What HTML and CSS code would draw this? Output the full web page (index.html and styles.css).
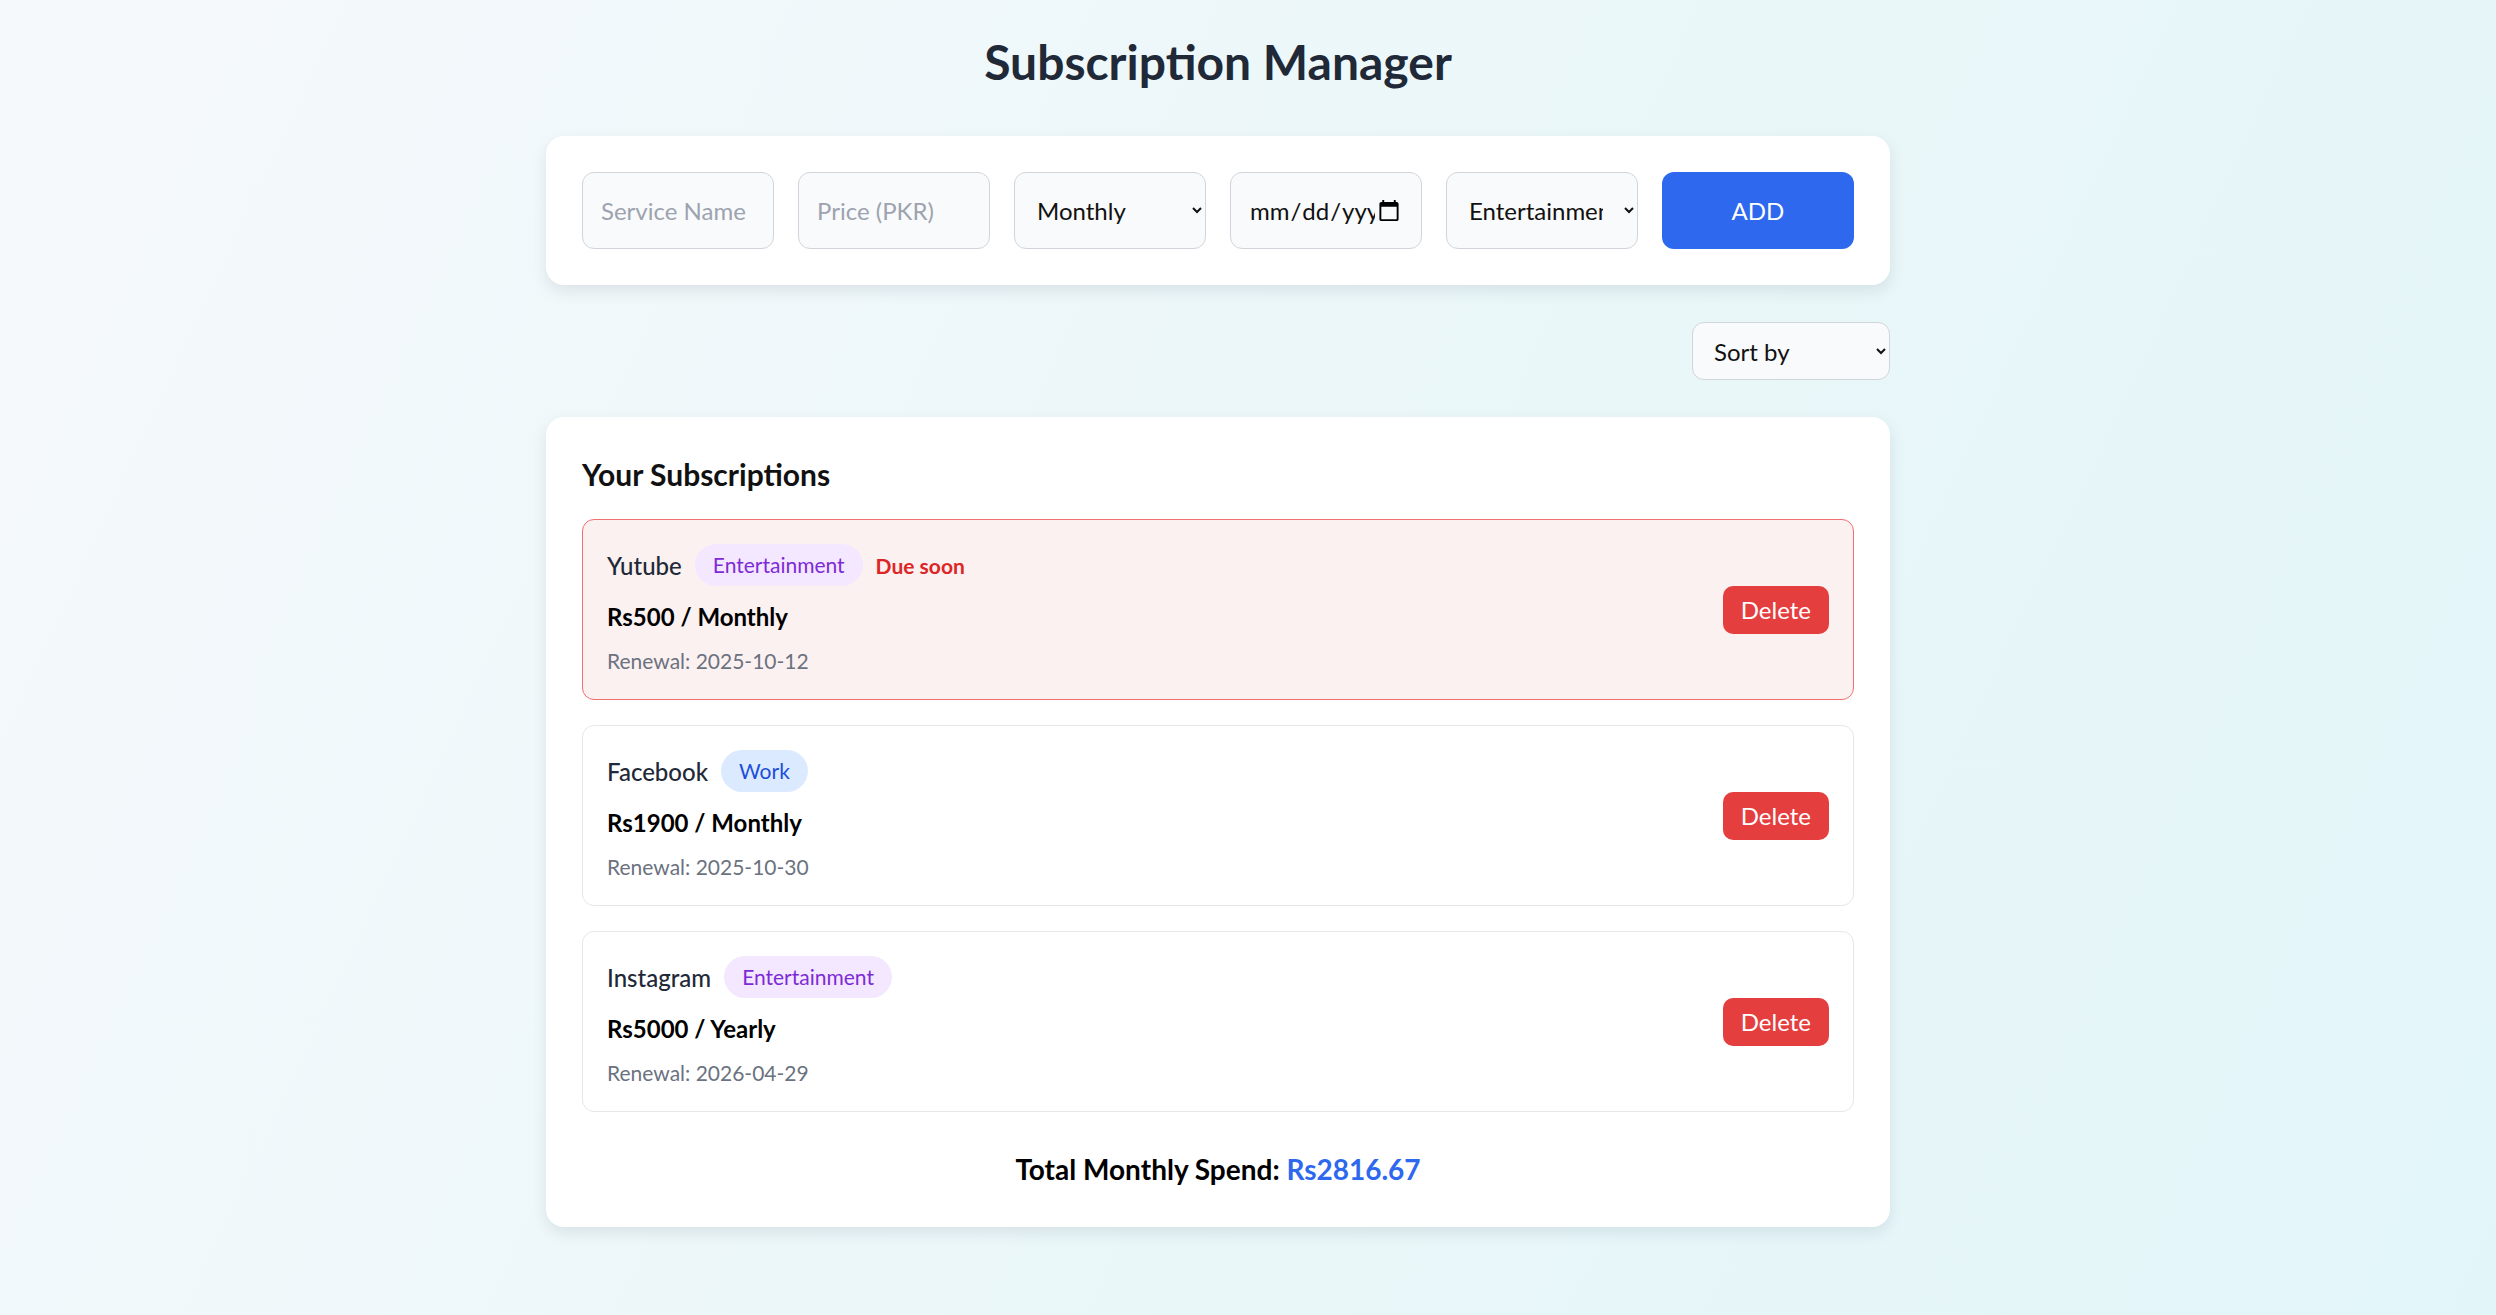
FILE: index.html
```html
<!DOCTYPE html>
<html lang="en">
<head>
<meta charset="utf-8">
<title>Subscription Manager</title>
<link rel="stylesheet" href="styles.css">
</head>
<body>
<main class="app">
  <h1 class="title">Subscription Manager</h1>

  <form class="card add-form">
    <input class="field" type="text" placeholder="Service Name">
    <input class="field" type="text" placeholder="Price (PKR)">
    <select class="field">
      <option>Monthly</option>
      <option>Yearly</option>
    </select>
    <input class="field" type="date">
    <select class="field">
      <option>Entertainment</option>
      <option>Work</option>
    </select>
    <button class="add-btn" type="button">ADD</button>
  </form>

  <div class="sort-row">
    <select class="field sort">
      <option>Sort by</option>
    </select>
  </div>

  <section class="card list-card">
    <h2 class="list-title">Your Subscriptions</h2>

    <div class="sub-list">
      <div class="sub due">
        <div class="sub-info">
          <div class="sub-head">
            <span class="sub-name">Yutube</span>
            <span class="badge badge-ent">Entertainment</span>
            <span class="due-label">Due soon</span>
          </div>
          <div class="sub-price">Rs500 / Monthly</div>
          <div class="sub-renew">Renewal: 2025-10-12</div>
        </div>
        <button class="del-btn" type="button">Delete</button>
      </div>

      <div class="sub">
        <div class="sub-info">
          <div class="sub-head">
            <span class="sub-name">Facebook</span>
            <span class="badge badge-work">Work</span>
          </div>
          <div class="sub-price">Rs1900 / Monthly</div>
          <div class="sub-renew">Renewal: 2025-10-30</div>
        </div>
        <button class="del-btn" type="button">Delete</button>
      </div>

      <div class="sub">
        <div class="sub-info">
          <div class="sub-head">
            <span class="sub-name">Instagram</span>
            <span class="badge badge-ent">Entertainment</span>
          </div>
          <div class="sub-price">Rs5000 / Yearly</div>
          <div class="sub-renew">Renewal: 2026-04-29</div>
        </div>
        <button class="del-btn" type="button">Delete</button>
      </div>
    </div>

    <p class="total">Total Monthly Spend: <span class="total-value">Rs2816.67</span></p>
  </section>
</main>
</body>
</html>
```

FILE: styles.css
```css
* {
  box-sizing: border-box;
}

html, body {
  height: 100%;
}

body {
  margin: 0;
  padding: 30px 60px 0 0;
  font-family: "Segoe UI", "Lato", "Open Sans", sans-serif;
  background: linear-gradient(115deg, #f6f9fc 0%, #eaf7f9 55%, #e2f5f8 100%);
  color: #1f2937;
}

.app {
  max-width: 1344px;
  margin: 0 auto;
}

.title {
  margin: 0 0 42px;
  text-align: center;
  font-size: 48px;
  line-height: 64px;
  font-weight: 700;
  color: #1f2937;
}

.card {
  background: #ffffff;
  border-radius: 18px;
  box-shadow: 0 6px 16px rgba(15, 23, 42, 0.09);
}

.add-form {
  display: grid;
  grid-template-columns: repeat(6, 1fr);
  gap: 24px;
  padding: 36px;
}

.field {
  height: 77px;
  min-width: 0;
  width: 100%;
  padding: 0 18px;
  font-family: inherit;
  font-size: 24px;
  color: #111111;
  background: #f9fafb;
  border: 1px solid #d1d5db;
  border-radius: 12px;
  outline: none;
}

.field::placeholder {
  color: #9ca3af;
}

.add-btn {
  height: 77px;
  font-family: inherit;
  font-size: 24px;
  color: #ffffff;
  background: #2d68ee;
  border: none;
  border-radius: 12px;
}

.sort-row {
  display: flex;
  justify-content: flex-end;
  margin: 37px 0;
}

.sort {
  width: 198px;
  height: 58px;
  padding: 0 12px 0 17px;
}

.list-card {
  padding: 36px 36px 40px;
}

.list-title {
  margin: 0 0 24px;
  font-size: 30px;
  line-height: 42px;
  font-weight: 700;
  color: #111111;
}

.sub-list {
  display: flex;
  flex-direction: column;
  gap: 25px;
}

.sub {
  display: flex;
  align-items: center;
  justify-content: space-between;
  padding: 24px;
  border: 1px solid #e5e7eb;
  border-radius: 12px;
  background: #ffffff;
}

.sub.due {
  background: #fcf1f1;
  border-color: #f07070;
}

.sub-head {
  display: flex;
  align-items: center;
  gap: 13px;
  height: 42px;
}

.sub-name {
  font-size: 24px;
  font-weight: 500;
  color: #1f2937;
}

.badge {
  height: 42px;
  line-height: 42px;
  padding: 0 18px;
  border-radius: 999px;
  font-size: 21px;
}

.badge-ent {
  background: #f3e8ff;
  color: #7e2bd6;
}

.badge-work {
  background: #dbeafe;
  color: #1d4ed8;
}

.due-label {
  font-size: 21px;
  font-weight: 700;
  color: #dc2626;
}

.sub-price {
  margin-top: 15px;
  font-size: 24px;
  line-height: 32px;
  font-weight: 700;
  color: #000000;
}

.sub-renew {
  margin-top: 14px;
  font-size: 21px;
  line-height: 28px;
  color: #6b7280;
}

.del-btn {
  height: 48px;
  padding: 0 18px;
  font-family: inherit;
  font-size: 24px;
  color: #ffffff;
  background: #e53e3e;
  border: none;
  border-radius: 10px;
}

.total {
  margin: 39px 0 0;
  text-align: center;
  font-size: 28px;
  line-height: 36px;
  font-weight: 700;
  color: #000000;
}

.total-value {
  color: #2d68ee;
}
```
